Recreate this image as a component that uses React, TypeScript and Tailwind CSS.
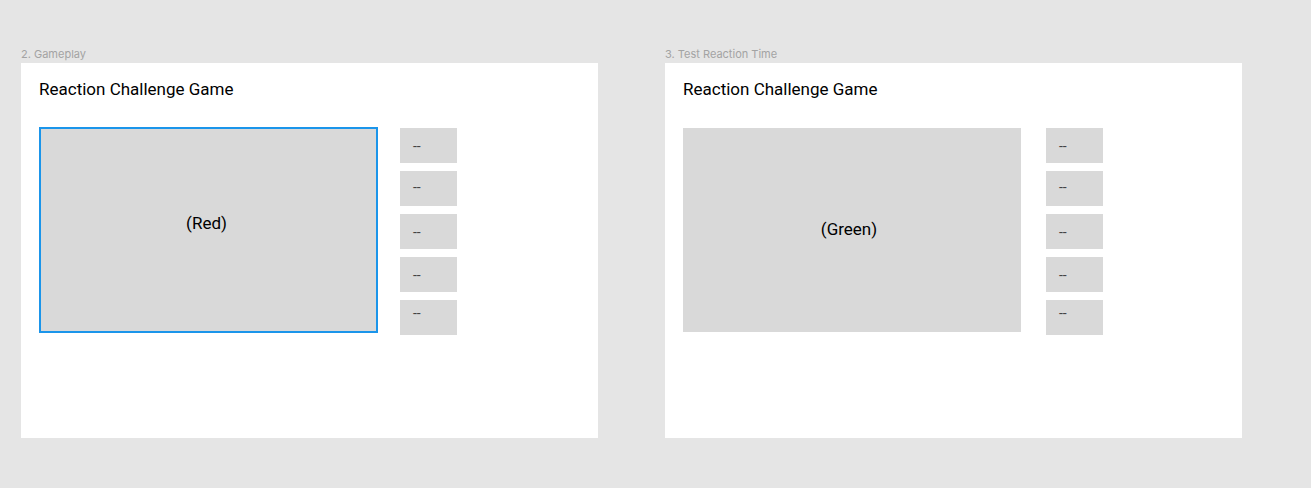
const SmallBoxes = () => {
  const tops = ['pt-[11px]', 'pt-[9px]', 'pt-[11px]', 'pt-[11px]', 'pt-[6px]']
  return (
    <div className="flex flex-col gap-[8px]">
      {tops.map((t, i) => (
        <div
          key={i}
          className={`w-[57px] h-[35px] bg-[#d9d9d9] pl-[13px] text-[14px] leading-[14px] text-[#444] ${t}`}
        >
          --
        </div>
      ))}
    </div>
  )
}

const Frame = ({
  label,
  color,
  selected,
}: {
  label: string
  color: string
  selected?: boolean
}) => (
  <div className="flex flex-col">
    <div className="text-[11px] leading-[13px] text-[#a3a3a3] mb-[2px] font-['Inter',sans-serif]">
      {label}
    </div>
    <div className="w-[577px] h-[375px] bg-white pl-[18px] pt-[16px] font-['Roboto',sans-serif]">
      <div className="text-[17px] leading-[21px] text-black">Reaction Challenge Game</div>
      <div className={`flex ${selected ? 'mt-[27px]' : 'mt-[28px]'}`}>
        {selected ? (
          <div className="w-[339px] h-[206px] border-2 border-[#1b95ea] bg-[#d9d9d9] flex items-center justify-center pb-[12px] pr-[4px] mr-[22px]">
            <span className="text-[17px] text-black">({color})</span>
          </div>
        ) : (
          <div className="w-[338px] h-[204px] bg-[#d9d9d9] flex items-center justify-center mr-[25px]">
            <span className="text-[17px] text-black pr-[6px]">({color})</span>
          </div>
        )}
        <div className={selected ? 'mt-[1px]' : ''}>
          <SmallBoxes />
        </div>
      </div>
    </div>
  </div>
)

export default function App() {
  return (
    <div className="w-full h-[488px] bg-[#e5e5e5] pl-[21px] pt-[48px] flex gap-[67px]">
      <Frame label="2. Gameplay" color="Red" selected />
      <Frame label="3. Test Reaction Time" color="Green" />
    </div>
  )
}
